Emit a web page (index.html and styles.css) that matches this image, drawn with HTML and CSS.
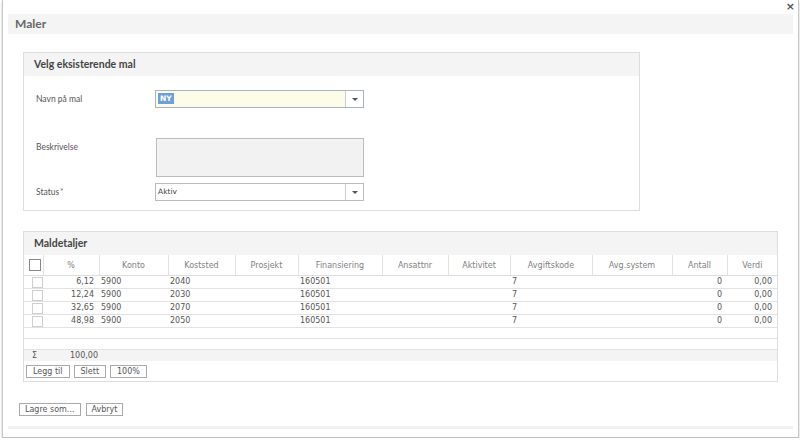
FILE: index.html
```html
<!DOCTYPE html>
<html lang="no">
<head>
    <meta charset="UTF-8">
    <meta name="viewport" content="width=device-width, initial-scale=1.0">
    <title>Maler</title>
    <link rel="stylesheet" href="styles.css">
</head>
<body>

    <div class="modal">
        <span class="close">&times;</span>
        <div class="title-bar">Maler</div>

        <div class="modal-body">
            <!-- Velg mal -->
            <section class="panel panel-form">
                <div class="panel-head">Velg eksisterende mal</div>
                <div class="form-grid">
                    <label class="lbl">Navn på mal</label>
                    <div class="select select-focus">
                        <span class="select-value"><span class="sel-text">NY</span></span>
                        <span class="select-arrow"></span>
                    </div>

                    <label class="lbl lbl-top">Beskrivelse</label>
                    <div class="textarea"></div>

                    <label class="lbl lbl-status">Status<span class="req">*</span></label>
                    <div class="select select-status">
                        <span class="select-value">Aktiv</span>
                        <span class="select-arrow"></span>
                    </div>
                </div>
            </section>

            <!-- Maldetaljer -->
            <section class="panel panel-table">
                <div class="panel-head">Maldetaljer</div>
                <table class="grid">
                    <colgroup>
                        <col style="width:19px">
                        <col style="width:56px">
                        <col style="width:69px">
                        <col style="width:67px">
                        <col style="width:63px">
                        <col style="width:84px">
                        <col style="width:66px">
                        <col style="width:62px">
                        <col style="width:82px">
                        <col style="width:80px">
                        <col style="width:55px">
                        <col style="width:50px">
                    </colgroup>
                    <thead>
                        <tr>
                            <th><span class="cb cb-head"></span></th>
                            <th>%</th>
                            <th>Konto</th>
                            <th>Koststed</th>
                            <th>Prosjekt</th>
                            <th>Finansiering</th>
                            <th>Ansattnr</th>
                            <th>Aktivitet</th>
                            <th>Avgiftskode</th>
                            <th>Avg.system</th>
                            <th>Antall</th>
                            <th>Verdi</th>
                        </tr>
                    </thead>
                    <tbody>
                        <tr>
                            <td><span class="cb"></span></td>
                            <td class="num">6,12</td><td>5900</td><td>2040</td><td></td><td>160501</td>
                            <td></td><td></td><td>7</td><td></td><td class="num">0</td><td class="num">0,00</td>
                        </tr>
                        <tr>
                            <td><span class="cb"></span></td>
                            <td class="num">12,24</td><td>5900</td><td>2030</td><td></td><td>160501</td>
                            <td></td><td></td><td>7</td><td></td><td class="num">0</td><td class="num">0,00</td>
                        </tr>
                        <tr>
                            <td><span class="cb"></span></td>
                            <td class="num">32,65</td><td>5900</td><td>2070</td><td></td><td>160501</td>
                            <td></td><td></td><td>7</td><td></td><td class="num">0</td><td class="num">0,00</td>
                        </tr>
                        <tr>
                            <td><span class="cb"></span></td>
                            <td class="num">48,98</td><td>5900</td><td>2050</td><td></td><td>160501</td>
                            <td></td><td></td><td>7</td><td></td><td class="num">0</td><td class="num">0,00</td>
                        </tr>
                    </tbody>
                </table>
                <div class="filler"></div>
                <div class="filler"></div>
                <div class="sum-row">
                    <span class="sum-sign">&Sigma;</span>
                    <span class="sum-value">100,00</span>
                </div>
                <div class="btn-row">
                    <button class="btn">Legg til</button>
                    <button class="btn">Slett</button>
                    <button class="btn">100%</button>
                </div>
            </section>

            <div class="footer">
                <button class="btn btn-foot">Lagre som...</button>
                <button class="btn btn-foot">Avbryt</button>
            </div>
        </div>

        <div class="bottom-strip"></div>
    </div>

</body>
</html>
```

FILE: styles.css
```css
/* Generelt */
body {
    margin: 0;
    padding: 0;
    background: #fff;
    font-family: Lato, "Open Sans", sans-serif;
    color: #444;
}

/* Modalvindu */
.modal {
    position: relative;
    width: 795px;
    margin-left: 2px;
    padding-top: 14px;
    padding-bottom: 8px;
    background: #fff;
    border-left: 1px solid #c8c8c8;
    border-right: 1px solid #c8c8c8;
    border-bottom: 1px solid #bdbdbd;
    box-shadow: 0 2px 2px rgba(0, 0, 0, 0.25);
}

.close {
    position: absolute;
    top: 0;
    right: 3px;
    font-family: "DejaVu Sans", sans-serif;
    font-size: 11px;
    font-weight: bold;
    color: #555;
}

/* Tittel */
.title-bar {
    height: 20px;
    margin: 0 5px;
    padding-left: 7px;
    background: #f4f4f4;
    font-size: 12px;
    font-weight: bold;
    line-height: 20px;
    color: #666;
}

.modal-body {
    padding-left: 20px;
    padding-top: 18px;
}

/* Paneler */
.panel {
    border: 1px solid #ddd;
    background: #fff;
}

.panel-form {
    width: 615px;
}

.panel-table {
    width: 753px;
    margin-top: 20px;
}

.panel-head {
    height: 23px;
    padding-left: 10px;
    background: #f4f4f4;
    font-size: 10.5px;
    font-weight: bold;
    line-height: 23px;
    color: #444;
}

/* Skjema */
.form-grid {
    display: grid;
    grid-template-columns: 119px 209px;
    align-items: center;
    padding: 14px 0 9px 12px;
}

.lbl {
    font-size: 8.5px;
    color: #555;
}

.lbl-top {
    align-self: start;
    margin-top: 34px;
}

.lbl-status {
    margin-top: 6px;
}

.req {
    color: #777;
    margin-left: 1px;
}

.select {
    display: flex;
    height: 16px;
    border: 1px solid #bbb;
    background: #fff;
}

.select-focus {
    border-color: #a7b3bf;
}

.select-focus .select-value {
    background: #fcfce9;
}

.select-status {
    margin-top: 6px;
}

.select-value {
    flex: 1;
    padding-left: 2px;
    font-family: "DejaVu Sans", sans-serif;
    font-size: 7.5px;
    line-height: 16px;
    color: #444;
    border-right: 1px solid #ccc;
}

.sel-text {
    padding: 1px 2px;
    background: #6f9fd8;
    color: #fff;
    font-weight: bold;
}

.select-arrow {
    width: 17px;
    display: flex;
    align-items: center;
    justify-content: center;
}

.select-arrow::after {
    content: "";
    border-left: 3px solid transparent;
    border-right: 3px solid transparent;
    border-top: 3px solid #555;
}

.textarea {
    height: 37px;
    width: 206px;
    margin-top: 30px;
    margin-left: 1px;
    border: 1px solid #bbb;
    background: #f2f2f2;
}

/* Tabell */
.grid {
    width: 753px;
    table-layout: fixed;
    border-collapse: collapse;
    font-family: "DejaVu Sans", sans-serif;
    font-size: 8px;
    color: #555;
}

.grid th {
    height: 20px;
    padding: 0;
    font-weight: normal;
    color: #808080;
    text-align: center;
    border-right: 1px solid #e2e2e2;
    border-bottom: 1px solid #ddd;
}

.grid th:last-child {
    border-right: none;
}

.grid td {
    height: 12px;
    padding: 0 0 0 2px;
    line-height: 12px;
    white-space: nowrap;
    border-bottom: 1px solid #e2e2e2;
}

.grid td.num {
    text-align: right;
    padding: 0 5px 0 0;
}

.cb {
    display: block;
    width: 9px;
    height: 9px;
    margin-left: 6px;
    border: 1px solid #cfcfcf;
    background: #fff;
}

.cb-head {
    width: 10px;
    height: 10px;
    margin-left: 5px;
    border-color: #888;
}

.filler {
    height: 10px;
    border-bottom: 1px solid #e2e2e2;
}

.sum-row {
    display: flex;
    height: 11px;
    background: #f4f4f4;
    font-family: "DejaVu Sans", sans-serif;
    font-size: 8px;
    line-height: 11px;
    color: #555;
}

.sum-sign {
    width: 38px;
    padding-left: 8px;
}

.btn-row {
    display: flex;
    gap: 4px;
    padding: 4px 0 3px 2px;
}

/* Knapper */
.btn {
    height: 13px;
    padding: 0 6px;
    border: 1px solid #aaa;
    background: #fff;
    font-family: "DejaVu Sans", sans-serif;
    font-size: 8px;
    line-height: 11px;
    color: #555;
}

.footer {
    display: flex;
    gap: 5px;
    margin-left: -4px;
    padding-top: 21px;
}

.btn-foot {
    padding: 0 5px;
}

.bottom-strip {
    height: 3px;
    margin: 10px 5px 0 5px;
    background: #f0f0f0;
}
```
